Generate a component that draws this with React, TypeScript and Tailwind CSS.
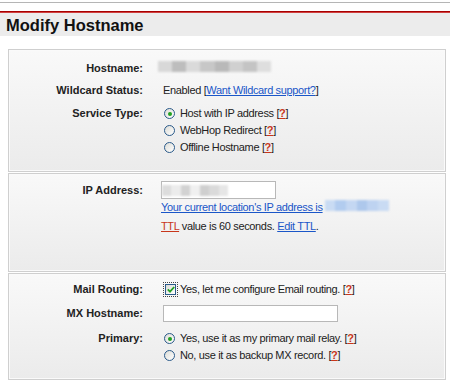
import React from "react";

const font = "font-['Liberation_Sans',Arial,sans-serif]";

function Help() {
  return (
    <span className="text-[#222]">
      [<span className="font-bold text-[#c8361b] underline">?</span>]
    </span>
  );
}

function Radio({ checked }: { checked?: boolean }) {
  return (
    <span className="inline-flex items-center justify-center w-[11px] h-[11px] rounded-full border border-[#2a5a8a] bg-[linear-gradient(135deg,#dcdcd6,#ffffff)] mr-[5px] shrink-0">
      {checked && <span className="w-[4px] h-[4px] rounded-full bg-[#21a121]" />}
    </span>
  );
}

function Blur({ w, tone }: { w: number; tone: "gray" | "blue" | "light" }) {
  const blocks =
    tone === "blue"
      ? ["#c9dbf3", "#b2ccef", "#c4d7f2", "#aec8ec", "#bed3f1", "#c9dbf3"]
      : tone === "light"
      ? ["#dcdcdc", "#ececec", "#d2d2d2", "#f0f0f0", "#cfcfcf", "#dadada", "#e6e6e6"]
      : ["#d8d8d8", "#bdbdbd", "#dadada", "#c7c7c7", "#b9b9b9", "#d0d0d0", "#c4c4c4", "#dedede"];
  return (
    <span className="inline-flex h-[11px] blur-[1px]" style={{ width: w }}>
      {blocks.map((c, i) => (
        <span key={i} className="flex-1 h-full" style={{ background: c }} />
      ))}
    </span>
  );
}

function Label({ children }: { children: React.ReactNode }) {
  return (
    <div className="w-[134px] shrink-0 text-right font-bold text-[#222] tracking-normal">{children}</div>
  );
}

function Panel({ children, h }: { children: React.ReactNode; h: string }) {
  return (
    <div
      className={`ml-[8px] mr-[4px] border border-[#cfcfcf] shadow-[inset_0_0_0_1px_#fafafa] bg-[linear-gradient(#f9f9f9,#ebebeb)] ${h}`}
    >
      {children}
    </div>
  );
}

export default function App() {
  return (
    <div className={`${font} w-[450px] h-[381px] bg-white text-[11px] tracking-[-0.35px] text-[#222] overflow-hidden`}>
      <div className="h-[2px]" />
      <div className="h-px bg-[#b5b5b5]" />
      <div className="h-[8px]" />
      <div className="h-px bg-[#a80000]" />
      <div className="h-px bg-[#d04040]" />
      <div className="h-[23px] bg-[#ececec] flex items-center pl-[6px] pt-[1px]">
        <h1 className="text-[16.5px] font-bold tracking-normal text-[#111]">Modify Hostname</h1>
      </div>
      <div className="h-[13px]" />

      <Panel h="h-[123px]">
        <div className="pt-[7px]">
          <div className="flex items-center h-[22px]">
            <Label>Hostname:</Label>
            <div className="ml-[15px]">
              <Blur w={113} tone="gray" />
            </div>
          </div>
          <div className="flex items-center h-[22px]">
            <Label>Wildcard Status:</Label>
            <div className="ml-[20px]">
              Enabled [<a className="text-[#1a56c8] underline">Want Wildcard support?</a>]
            </div>
          </div>
          <div className="flex items-start mt-[4px]">
            <Label>Service Type:</Label>
            <div className="ml-[21px] flex flex-col">
              <div className="flex items-center h-[17px]">
                <Radio checked />
                <span>
                  Host with IP address <Help />
                </span>
              </div>
              <div className="flex items-center h-[17px]">
                <Radio />
                <span>
                  WebHop Redirect <Help />
                </span>
              </div>
              <div className="flex items-center h-[17px]">
                <Radio />
                <span>
                  Offline Hostname <Help />
                </span>
              </div>
            </div>
          </div>
        </div>
      </Panel>

      <div className="h-[1px]" />

      <Panel h="h-[99px]">
        <div className="pt-[7px]">
          <div className="flex items-center h-[18px]">
            <Label>IP Address:</Label>
            <div className="ml-[18px] w-[115px] h-[18px] border border-[#b8b8b8] bg-white flex items-center">
              <Blur w={66} tone="light" />
            </div>
          </div>
          <div className="flex items-center h-[16px]">
            <div className="w-[134px] shrink-0" />
            <div className="ml-[18px] flex items-center">
              <a className="text-[#1a56c8] underline">Your current location's IP address is</a>
              <span className="ml-[2px]">
                <Blur w={64} tone="blue" />
              </span>
            </div>
          </div>
          <div className="flex items-center h-[17px] mt-[3px]">
            <div className="w-[134px] shrink-0" />
            <div className="ml-[18px]">
              <span className="text-[#c8361b] underline">TTL</span> value is 60 seconds.{" "}
              <a className="text-[#1a56c8] underline">Edit TTL</a>.
            </div>
          </div>
        </div>
      </Panel>

      <div className="h-[1px]" />

      <Panel h="h-[107px]">
        <div className="pt-[6px]">
          <div className="flex items-center h-[18px]">
            <Label>Mail Routing:</Label>
            <div className="ml-[20px] flex items-center">
              <span className="w-[15px] h-[15px] border border-dotted border-[#444] flex items-center justify-center mr-[2px]">
                <span className="w-[11px] h-[11px] border border-[#2a5a8a] bg-[linear-gradient(135deg,#dcdcd6,#ffffff)] flex items-center justify-center">
                  <svg width="8" height="7" viewBox="0 0 8 7">
                    <path d="M0.8 3.4 L3 5.6 L7.2 1" fill="none" stroke="#21a121" strokeWidth="1.8" />
                  </svg>
                </span>
              </span>
              <span>
                Yes, let me configure Email routing. <Help />
              </span>
            </div>
          </div>
          <div className="flex items-center h-[18px] mt-[6px]">
            <Label>MX Hostname:</Label>
            <div className="ml-[20px] w-[175px] h-[17px] border border-[#b8b8b8] bg-white" />
          </div>
          <div className="flex items-start mt-[8px]">
            <Label>Primary:</Label>
            <div className="ml-[21px] flex flex-col">
              <div className="flex items-center h-[17px]">
                <Radio checked />
                <span>
                  Yes, use it as my primary mail relay. <Help />
                </span>
              </div>
              <div className="flex items-center h-[17px]">
                <Radio />
                <span>
                  No, use it as backup MX record. <Help />
                </span>
              </div>
            </div>
          </div>
        </div>
      </Panel>
    </div>
  );
}
